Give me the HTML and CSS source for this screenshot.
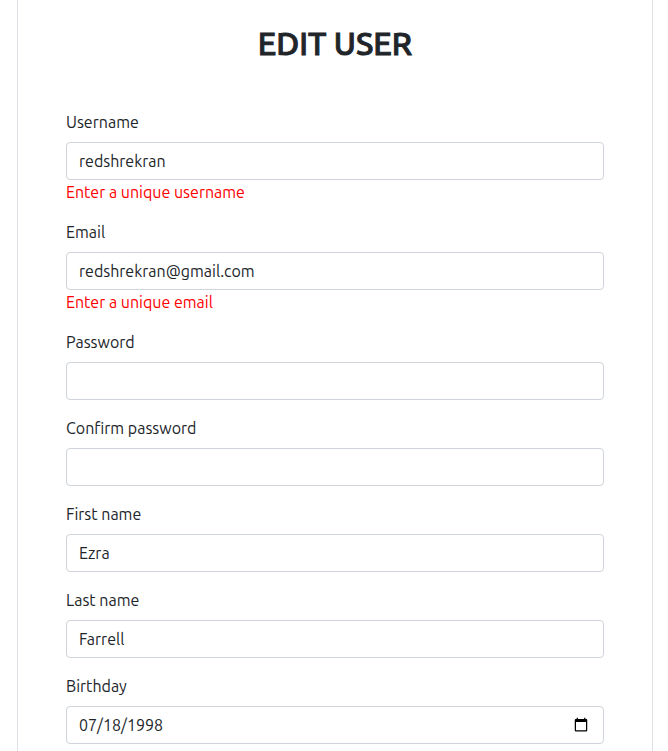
FILE: index.html
```html
<!DOCTYPE html>
<html lang="en">
<head>
<meta charset="utf-8">
<title>Edit user</title>
<link rel="stylesheet" href="styles.css">
</head>
<body>
<main class="card">
<h1 class="title">EDIT USER</h1>
<form class="form">
<div class="field"><label for="username">Username</label><input id="username" type="text" value="redshrekran"><p class="error">Enter a unique username</p></div>
<div class="field"><label for="email">Email</label><input id="email" type="email" value="redshrekran@gmail.com"><p class="error">Enter a unique email</p></div>
<div class="field"><label for="password">Password</label><input id="password" type="password"></div>
<div class="field"><label for="confirm">Confirm password</label><input id="confirm" type="password"></div>
<div class="field"><label for="first">First name</label><input id="first" type="text" value="Ezra"></div>
<div class="field"><label for="last">Last name</label><input id="last" type="text" value="Farrell"></div>
<div class="field"><label for="birthday">Birthday</label><input id="birthday" type="date" value="1998-07-18"></div>
</form>
</main>
</body>
</html>
```
FILE: styles.css
```css
* {
  box-sizing: border-box;
}

body {
  margin: 0;
  font: 16px/24px Ubuntu, "Noto Sans", "Open Sans", sans-serif;
  color: #212529;
  background: #fff;
}

.card {
  margin: 0 15px 0 17px;
  padding: 24px 48px 7px;
  border: solid #dee2e6;
  border-width: 0 1px;
}

.title {
  margin: 0 0 48px;
  font-size: 32px;
  line-height: 38px;
  font-weight: 500;
  -webkit-text-stroke: 1px currentColor;
  text-align: center;
}

.form {
  display: flex;
  flex-direction: column;
  gap: 16px;
}

.field {
  display: flex;
  flex-direction: column;
}

.field label {
  margin-bottom: 8px;
}

.field input {
  width: 100%;
  height: 38px;
  padding: 6px 12px;
  font: inherit;
  color: inherit;
  background: #fff;
  border: 1px solid #ced4da;
  border-radius: 4px;
}

.field input::-webkit-datetime-edit-fields-wrapper,
.field input::-webkit-datetime-edit-month-field,
.field input::-webkit-datetime-edit-day-field,
.field input::-webkit-datetime-edit-year-field,
.field input::-webkit-datetime-edit-text {
  padding: 0;
}

.error {
  margin: 0;
  color: #f00;
}
```
